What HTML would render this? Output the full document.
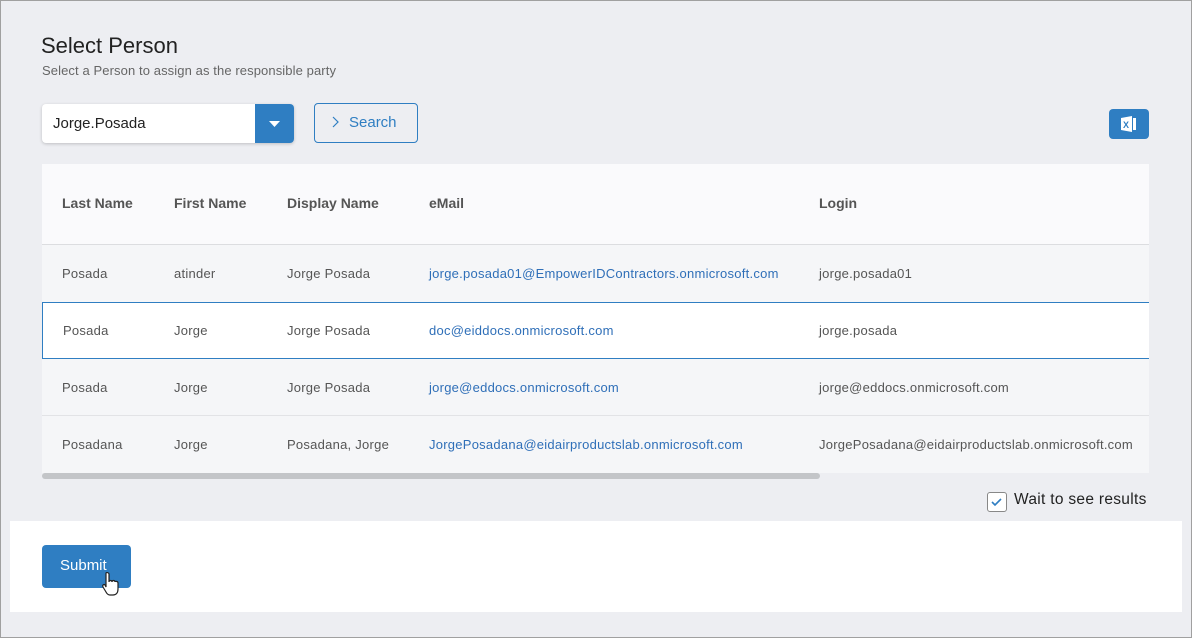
<!DOCTYPE html>
<html><head><style>
*{margin:0;padding:0;box-sizing:border-box}
body{width:1192px;height:638px;background:#edeef2;font-family:"Liberation Sans",sans-serif;position:relative;overflow:hidden}
.frame{position:absolute;left:0;top:0;width:1192px;height:638px;border:1px solid #a0a0a0;pointer-events:none}
.a{position:absolute}
h1{position:absolute;left:41px;top:33px;font-size:22px;font-weight:normal;color:#222}
.sub{left:42px;top:63px;font-size:13px;color:#666;letter-spacing:0.1px}
.sel{left:42px;top:104px;width:252px;height:39px;background:#fff;border-radius:4px;box-shadow:0 1px 3px rgba(0,0,0,.2);font-size:15px;color:#222;padding:11px 0 0 11px}
.dd{left:255px;top:104px;width:39px;height:39px;background:#2f7ec2;border-radius:0 4px 4px 0}
.srch{left:314px;top:103px;width:104px;height:40px;border:1px solid #2f7ec2;border-radius:4px;color:#2f7ec2;font-size:15px;padding:10px 0 0 16px}
.xl{left:1109px;top:109px;width:40px;height:30px;background:#2f7ec2;border-radius:4px}
.tbl{left:42px;top:164px;width:1107px;height:309px;background:#f5f6f8;overflow:hidden}
.row{position:absolute;left:0;width:1107px;height:57px;font-size:13px;color:#555;letter-spacing:0.25px}
.row span{position:absolute;top:21px;white-space:nowrap}
.hd{top:0;height:81px;background:#fafafc;border-bottom:1px solid #dcdde0;font-weight:bold;font-size:14px;color:#555;letter-spacing:0}
.hd span{top:31px}
.l{color:#2f6fb8}
</style></head><body>
<h1>Select Person</h1>
<div class="a sub">Select a Person to assign as the responsible party</div>
<div class="a sel">Jorge.Posada</div>
<div class="a dd"><svg width="39" height="39"><path d="M14 17h11l-5.5 6z" fill="#fff"/></svg></div>
<div class="a srch"><svg width="10" height="12" style="margin-right:8px;vertical-align:-1px"><path d="M2 1l5 5-5 5" stroke="#2f7ec2" stroke-width="1.2" fill="none"/></svg>Search</div>
<div class="a xl"><svg width="40" height="30"><path d="M12 9l11-2v16l-11-2z" fill="#fff"/><rect x="24" y="9" width="3" height="12" fill="#fff"/><text x="14" y="19" font-size="9" font-weight="bold" fill="#2f7ec2" font-family="Liberation Sans">X</text></svg></div>
<div class="a tbl">
<div class="row hd"><span style="left:20px">Last Name</span><span style="left:132px">First Name</span><span style="left:245px">Display Name</span><span style="left:387px">eMail</span><span style="left:777px">Login</span></div>
<div class="row" style="top:81px"><span style="left:20px">Posada</span><span style="left:132px">atinder</span><span style="left:245px">Jorge Posada</span><span class="l" style="left:387px">jorge.posada01@EmpowerIDContractors.onmicrosoft.com</span><span style="left:777px">jorge.posada01</span></div>
<div class="row" style="top:138px;background:#fff;border:1px solid #2f7ec2;width:1110px"><span style="left:20px;top:20px">Posada</span><span style="left:131px;top:20px">Jorge</span><span style="left:244px;top:20px">Jorge Posada</span><span class="l" style="left:386px;top:20px">doc@eiddocs.onmicrosoft.com</span><span style="left:776px;top:20px">jorge.posada</span></div>
<div class="row" style="top:195px;border-bottom:1px solid #e2e3e6"><span style="left:20px">Posada</span><span style="left:132px">Jorge</span><span style="left:245px">Jorge Posada</span><span class="l" style="left:387px">jorge@eddocs.onmicrosoft.com</span><span style="left:777px">jorge@eddocs.onmicrosoft.com</span></div>
<div class="row" style="top:252px"><span style="left:20px">Posadana</span><span style="left:132px">Jorge</span><span style="left:245px">Posadana, Jorge</span><span class="l" style="left:387px">JorgePosadana@eidairproductslab.onmicrosoft.com</span><span style="left:777px">JorgePosadana@eidairproductslab.onmicrosoft.com</span></div>
</div>
<div class="a" style="left:42px;top:473px;width:778px;height:6px;background:#c3c5c8;border-radius:3px"></div>
<div class="a" style="left:987px;top:492px;width:20px;height:20px;border:1px solid #888;border-radius:3px;background:#fff"><svg width="18" height="18"><path d="M4 9l3 3 6-6" stroke="#2f7ec2" stroke-width="1.6" fill="none"/></svg></div>
<div class="a" style="left:1014px;top:491px;font-size:15.5px;color:#222;letter-spacing:0.3px">Wait to see results</div>
<div class="a" style="left:10px;top:521px;width:1172px;height:91px;background:#fff"></div>
<div class="a" style="left:42px;top:545px;width:89px;height:43px;background:#2f7ec2;border-radius:4px;color:#fff;font-size:15px;padding:12px 0 0 18px">Submit</div>
<svg class="a" style="left:101px;top:571px" width="20" height="26"><path d="M5 2c1-1 3 0 3 1v8c0-2 3-2 3 0 0-2 3-2 3 0 0-1 3-1 3 1v6c0 4-2 6-5 6h-3c-2 0-3-1-4-3l-3-5c-1-2 1-3 2-2l1 2V3z" fill="#fff" stroke="#222" stroke-width="1.2"/></svg>
<div class="frame"></div>
</body></html>
